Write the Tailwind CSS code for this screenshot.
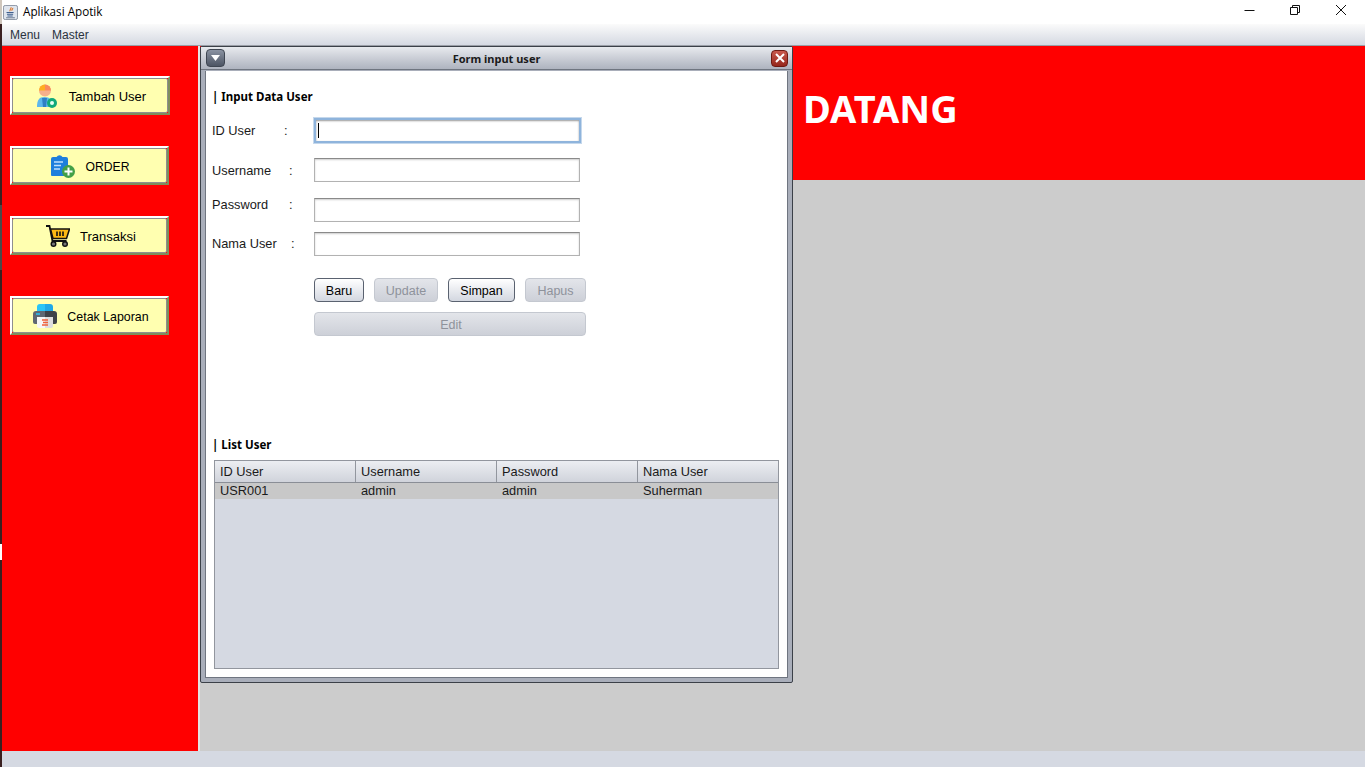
<!DOCTYPE html>
<html lang="id">
<head>
    <meta charset="UTF-8">
    <title>Aplikasi Apotik</title>
    <script src="https://cdn.jsdelivr.net/npm/@tailwindcss/browser@4"></script>
</head>
<body class="h-[767px] w-[1365px] overflow-hidden flex bg-white font-['Liberation_Sans',sans-serif] text-[12.8px] text-[#1a1a1a]">

    <!-- sisa desktop di tepi kiri -->
    <div class="w-[2px] h-full flex flex-col shrink-0">
        <div class="h-[24px] bg-[#cfc6bc]"></div>
        <div class="h-[181px] bg-[#3a2020]"></div>
        <div class="h-[65px] bg-[#4a4a4a]"></div>
        <div class="h-[274px] bg-[#3a2020]"></div>
        <div class="h-[16px] bg-white"></div>
        <div class="flex-1 bg-[#3a2020]"></div>
    </div>

    <div class="flex-1 flex flex-col min-w-0">
        <!-- title bar -->
        <div class="h-[24px] flex items-center bg-white shrink-0">
            <svg class="ml-[1px] w-[15px] h-[15px]" viewBox="0 0 17 17">
                <rect x="0.5" y="0.5" width="16" height="16" rx="2" fill="#dfe5ee" stroke="#7f8a9a"/>
                <path d="M9 2.500c1 1.500-2 2.500-1 4.500M11 3.500c.5 1-1.500 1.500-.8 3" stroke="#e0701c" stroke-width="1.200" fill="none"/>
                <path d="M4 8.500h8M4.500 10.500h7M5 12.500h6" stroke="#3f5f8f" stroke-width="1.200"/>
                <path d="M3.500 14.500h10" stroke="#5f6f88" stroke-width="1"/>
            </svg>
            <span class="ml-[5px] font-['Open_Sans',sans-serif] text-[11.700px] text-black">Aplikasi Apotik</span>
            <div class="ml-auto flex items-center h-full pb-[4px] pr-[1px]">
                <div class="w-[46px] flex justify-center"><svg class="w-[12px] h-[12px]" viewBox="0 0 12 12"><path d="M1.500 6.500h10" stroke="#111" stroke-width="1"/></svg></div>
                <div class="w-[46px] flex justify-center"><svg class="w-[12px] h-[12px]" viewBox="0 0 12 12"><path d="M1.500 3.500h7v7h-7zM3.500 3.500v-2h7v7h-2" stroke="#111" stroke-width="1" fill="none"/></svg></div>
                <div class="w-[46px] flex justify-center"><svg class="w-[12px] h-[12px]" viewBox="0 0 12 12"><path d="M1 1l10 10M11 1L1 11" stroke="#111" stroke-width="1"/></svg></div>
            </div>
        </div>

        <!-- menu bar -->
        <div class="h-[22px] flex items-center gap-[12px] pl-[8px] shrink-0 border-b border-[#9a9ea6] bg-linear-to-b from-[#fbfbfb] to-[#d5d9e2] text-[12px] text-[#2a3340]">
            <span>Menu</span>
            <span>Master</span>
        </div>

        <!-- isi -->
        <div class="flex-1 flex relative min-h-0">
            <aside class="w-[196px] bg-[#ff0000] shrink-0 pl-[8px] pt-[30px] flex flex-col">
                <button class="w-[160px] h-[39px] border-2 border-t-white border-l-white border-r-[#7e8f5c] border-b-[#7e8f5c] bg-[#ff0000]">
                    <div class="h-full flex items-center justify-center gap-[12px] pl-[3px] rounded-[2px] border border-[#8f8f8f] bg-[#ffffb0] text-[13px] text-black">
                        <svg class="w-[20px] h-[24px]" viewBox="0 0 20 24">
                            <path d="M0 23c0-7 2-10 7.500-10s7.500 3 7.500 10z" fill="#5db7ec"/>
                            <path d="M5 14h5l-1 9H6z" fill="#2f7fc4"/>
                            <circle cx="8" cy="6.500" r="6" fill="#f6b08c"/>
                            <path d="M2 6.500a6 6 0 0 1 6-6v6z" fill="#ffae1f"/>
                            <path d="M8 .5a6 6 0 0 1 6 6H8z" fill="#f98a5c"/>
                            <circle cx="15" cy="19" r="5" fill="#12a97a"/>
                            <circle cx="15" cy="19" r="2" fill="#e8fff5"/>
                        </svg>
                        <span class="pt-[2px]">Tambah User</span>
                    </div>
                </button>
                <button class="mt-[31px] w-[159px] h-[39px] border-2 border-t-white border-l-white border-r-[#7e8f5c] border-b-[#7e8f5c] bg-[#ff0000]">
                    <div class="h-full flex items-center justify-center gap-[10px] pl-[2px] rounded-[2px] border border-[#8f8f8f] bg-[#ffffb0] text-[12.200px] text-black">
                        <svg class="w-[24px] h-[24px]" viewBox="0 0 24 24">
                            <path d="M0 5a2 2 0 0 1 2-2h3.500a3.500 3.500 0 0 1 6 0H15a2 2 0 0 1 2 2v16a1 1 0 0 1-1 1H1a1 1 0 0 1-1-1z" fill="#1e7fdc"/>
                            <path d="M3 8h9M3 11.500h7M3 15h6" stroke="#bfe0fb" stroke-width="1.400"/>
                            <circle cx="17.500" cy="17.500" r="6.500" fill="#43a047"/>
                            <path d="M17.500 13.500v8M13.500 17.500h8" stroke="#fff" stroke-width="2"/>
                        </svg>
                        <span class="pt-[3px]">ORDER</span>
                    </div>
                </button>
                <button class="mt-[31px] w-[159px] h-[39px] border-2 border-t-white border-l-white border-r-[#7e8f5c] border-b-[#7e8f5c] bg-[#ff0000]">
                    <div class="h-full flex items-center justify-center gap-[10px] pl-[3px] rounded-[2px] border border-[#8f8f8f] bg-[#ffffb0] text-[13px] text-black">
                        <svg class="w-[24px] h-[22px]" viewBox="0 0 24 22">
                            <path d="M0 1h3.500l3 15h14" stroke="#111" stroke-width="1.800" fill="none"/>
                            <path d="M4.500 4h19l-3 9.500H7z" fill="#fdb913" stroke="#111" stroke-width="1.500"/>
                            <path d="M11 6.500v4.500M14 6.500v4.500M17 6.500v4.500" stroke="#111" stroke-width="1.600"/>
                            <circle cx="7.500" cy="19" r="2.300" fill="#777" stroke="#111" stroke-width="1.400"/>
                            <circle cx="19" cy="19" r="2.300" fill="#777" stroke="#111" stroke-width="1.400"/>
                        </svg>
                        <span class="pt-[2px]">Transaksi</span>
                    </div>
                </button>
                <button class="mt-[41px] w-[159px] h-[39px] border-2 border-t-white border-l-white border-r-[#7e8f5c] border-b-[#7e8f5c] bg-[#ff0000]">
                    <div class="h-full flex items-center justify-center gap-[10px] pl-[3px] rounded-[2px] border border-[#8f8f8f] bg-[#ffffb0] text-[12.400px] text-black">
                        <svg class="w-[24px] h-[24px]" viewBox="0 0 24 24">
                            <path d="M4 3a3 3 0 0 1 3-3h5v8H4z" fill="#29c5f6"/>
                            <path d="M12 0h5a3 3 0 0 1 3 3v5h-8z" fill="#1fa9e8"/>
                            <path d="M3 7h9v13H2a2 2 0 0 1-2-2v-8a3 3 0 0 1 3-3z" fill="#5f6873"/>
                            <path d="M12 7h9a3 3 0 0 1 3 3v8a2 2 0 0 1-2 2H12z" fill="#3f4348"/>
                            <path d="M3 10h4" stroke="#29c5f6" stroke-width="1.500"/>
                            <path d="M4 13h8v11H6a2 2 0 0 1-2-2z" fill="#f7f7f7"/>
                            <path d="M12 13h8v9a2 2 0 0 1-2 2h-6z" fill="#dedede"/>
                            <path d="M9 16h6M10 18.500h5M9 21h6" stroke="#f0603a" stroke-width="1.300"/>
                        </svg>
                        <span class="pt-[3px]">Cetak Laporan</span>
                    </div>
                </button>
            </aside>
            <div class="w-[2px] bg-[#e4e4e4] shrink-0"></div>

            <!-- desktop pane -->
            <main class="flex-1 bg-[#cccccc]">
                <div class="h-[134px] bg-[#ff0000] flex items-center pl-[603px] pb-[9px] font-['Noto_Sans',sans-serif] text-[38px] font-bold text-white">DATANG</div>
            </main>

            <!-- internal frame -->
            <section class="absolute left-[198px] top-0 w-[593px] h-[637px] flex flex-col rounded-[2px] border border-[#3b4048] bg-[#a9aeba]">
                <div class="h-[23px] shrink-0 flex items-center justify-between pl-[5px] pr-[4px] bg-linear-to-b from-[#e8eaee] to-[#aeb3bf] border-b border-[#6f7580]">
                    <div class="w-[19px] h-[18px] rounded-[4px] border border-[#3f4652] bg-linear-to-b from-[#8b93a2] to-[#4d5564] flex items-center justify-center">
                        <svg class="w-[9px] h-[6px]" viewBox="0 0 9 6"><path d="M0 0h9L4.500 6z" fill="#fff"/></svg>
                    </div>
                    <span class="pt-[3px] pr-[3px] font-['Noto_Sans',sans-serif] text-[11px] font-bold text-[#1a1a1a]">Form input user</span>
                    <div class="w-[17px] h-[17px] rounded-[4px] border border-[#6e1a12] bg-linear-to-b from-[#c9594d] to-[#96271c] flex items-center justify-center">
                        <svg class="w-[10px] h-[10px]" viewBox="0 0 10 10"><path d="M1 1l8 8M9 1L1 9" stroke="#fff" stroke-width="2"/></svg>
                    </div>
                </div>

                <div class="mx-[4px] mb-[4px] mt-px flex-1 border-x border-b border-[#6f7580] bg-white flex flex-col pl-[6px] pr-[8px] min-h-0">
                    <h3 class="mt-[18px] h-[16px] leading-[16px] font-['Noto_Sans',sans-serif] text-[11.500px] font-bold text-black">| Input Data User</h3>

                    <div class="mt-[13px] flex items-center h-[25px]">
                        <label class="w-[72px]">ID User</label><span class="w-[30px]">:</span>
                        <div class="w-[267px] h-[25px] border-2 border-[#8fb4dc] bg-white shadow-[0_0_0_1px_#c5d8ec,inset_0_1px_2px_#999] flex items-center pl-[2px]"><div class="w-px h-[15px] bg-black"></div></div>
                    </div>
                    <div class="mt-[15px] flex items-center h-[24px]">
                        <label class="w-[77px] pt-[2px]">Username</label><span class="w-[25px] pt-[2px]">:</span>
                        <div class="w-[266px] h-[24px] border border-[#b2b2b2] border-t-[#8a8a8a] bg-white shadow-[inset_0_1px_2px_#ccc]"></div>
                    </div>
                    <div class="mt-[16px] flex items-start h-[24px]">
                        <label class="w-[77px] -mt-[3px]">Password</label><span class="w-[25px] -mt-[3px]">:</span>
                        <div class="w-[266px] h-[24px] border border-[#b2b2b2] border-t-[#8a8a8a] bg-white shadow-[inset_0_1px_2px_#ccc]"></div>
                    </div>
                    <div class="mt-[10px] flex items-center h-[24px]">
                        <label class="w-[79px]">Nama User</label><span class="w-[23px]">:</span>
                        <div class="w-[266px] h-[24px] border border-[#b2b2b2] border-t-[#8a8a8a] bg-white shadow-[inset_0_1px_2px_#ccc]"></div>
                    </div>

                    <div class="mt-[22px] ml-[102px] w-[272px] flex flex-col gap-[10px] text-[12.500px]">
                        <div class="flex justify-between h-[24px]">
                            <button class="w-[50px] pt-[2px] rounded-[4px] border border-[#5a6270] bg-linear-to-b from-white to-[#d3d7e0] text-black">Baru</button>
                            <button class="w-[64px] pt-[2px] rounded-[4px] border border-[#c4c8d0] bg-linear-to-b from-[#e3e5ea] to-[#cdd0d8] text-[#8e929b]">Update</button>
                            <button class="w-[67px] pt-[2px] rounded-[4px] border border-[#5a6270] bg-linear-to-b from-white to-[#d3d7e0] text-black">Simpan</button>
                            <button class="w-[61px] pt-[2px] rounded-[4px] border border-[#c4c8d0] bg-linear-to-b from-[#e3e5ea] to-[#cdd0d8] text-[#8e929b]">Hapus</button>
                        </div>
                        <button class="h-[24px] pl-[2px] pt-[2px] rounded-[4px] border border-[#c4c8d0] bg-linear-to-b from-[#e3e5ea] to-[#cdd0d8] text-[#8e929b]">Edit</button>
                    </div>

                    <h3 class="mt-[101px] h-[16px] leading-[16px] font-['Noto_Sans',sans-serif] text-[11.500px] font-bold text-black">| List User</h3>

                    <div class="mt-[7px] ml-[2px] w-[565px] h-[209px] border border-[#92969e] bg-[#d5d9e2] flex flex-col">
                        <div class="h-[22px] shrink-0 grid grid-cols-[141px_141px_141px_1fr] border-b border-[#8a8e96] bg-linear-to-b from-[#eceef2] to-[#d0d3db]">
                            <div class="pl-[5px] flex items-center border-r border-[#92969e]">ID User</div>
                            <div class="pl-[5px] flex items-center border-r border-[#92969e]">Username</div>
                            <div class="pl-[5px] flex items-center border-r border-[#92969e]">Password</div>
                            <div class="pl-[5px] flex items-center">Nama User</div>
                        </div>
                        <div class="h-[16px] shrink-0 grid grid-cols-[141px_141px_141px_1fr] items-start leading-[16px] bg-[#c8c8c8]">
                            <div class="pl-[5px]">USR001</div>
                            <div class="pl-[5px]">admin</div>
                            <div class="pl-[5px]">admin</div>
                            <div class="pl-[5px]">Suherman</div>
                        </div>
                    </div>
                </div>
            </section>
        </div>

        <!-- status bar -->
        <div class="h-[16px] shrink-0 bg-[#d5d9e2]"></div>
    </div>
</body>
</html>
